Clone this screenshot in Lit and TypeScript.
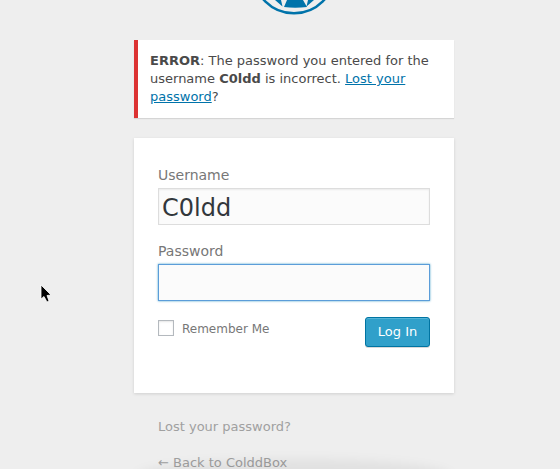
import { LitElement, html, css } from "lit";
import { customElement } from "lit/decorators.js";

@customElement("app-root")
export class AppRoot extends LitElement {
  static styles = css`
    :host {
      display: block;
      width: 560px;
      height: 469px;
      overflow: hidden;
      background: #eeeeee;
      font-family: "DejaVu Sans", sans-serif;
      font-size: 13px;
      line-height: 18px;
      color: #4a4a4a;
      position: relative;
    }
    .login {
      width: 320px;
      margin-left: 134px;
      display: flex;
      flex-direction: column;
    }
    .logo {
      height: 40px;
      display: flex;
      justify-content: center;
      align-items: flex-start;
      overflow: hidden;
    }
    .logo svg {
      width: 84px;
      height: 84px;
      margin-top: -28px;
      flex: none;
    }
    .error {
      height: 78px;
      box-sizing: border-box;
      background: #fff;
      border-left: 4px solid #dc3232;
      padding: 12px;
      box-shadow: 0 1px 1px 0 rgba(0, 0, 0, 0.1);
      margin-bottom: 20px;
    }
    .error a { color: #0073aa; text-decoration: underline; }
    form {
      height: 255px;
      box-sizing: border-box;
      background: #fff;
      padding: 27px 24px 0;
      box-shadow: 0 1px 3px rgba(0, 0, 0, 0.13);
      color: #777;
      font-size: 14px;
    }
    label { display: block; line-height: 20px; }
    .input {
      box-sizing: border-box;
      height: 37px;
      width: 272px;
      margin-top: 3px;
      padding: 3px;
      border: 1px solid #ddd;
      background: #fbfbfb;
      color: #32373c;
      font-size: 24px;
      line-height: 32px;
      box-shadow: inset 0 1px 2px rgba(0, 0, 0, 0.07);
      margin-bottom: 16px;
    }
    .input.focus {
      border-color: #5b9dd9;
      box-shadow: 0 0 2px rgba(30, 140, 190, 0.8);
      margin-bottom: 0;
    }
    .actions {
      display: flex;
      justify-content: space-between;
      align-items: flex-start;
      margin-top: 16px;
    }
    .remember {
      display: flex;
      align-items: flex-start;
      gap: 8px;
      font-size: 12px;
      line-height: 18px;
      margin-top: 3px;
    }
    .check {
      box-sizing: border-box;
      width: 16px;
      height: 16px;
      border: 1px solid #b4b9be;
      background: #fff;
      box-shadow: inset 0 1px 2px rgba(0, 0, 0, 0.1);
    }
    button {
      box-sizing: border-box;
      width: 65px;
      height: 30px;
      padding: 0;
      font: 13px/28px "DejaVu Sans", sans-serif;
      color: #fff;
      background: #30a0ca;
      border: 1px solid #0074a2;
      border-radius: 3px;
      box-shadow: inset 0 1px 0 rgba(120, 200, 230, 0.5), 0 1px 0 rgba(0, 0, 0, 0.15);
    }
    .nav {
      padding: 0 24px;
      margin-top: 25px;
      color: #a0a0a0;
      font-size: 13px;
      line-height: 18px;
    }
    .nav.back { margin-top: 18px; }
    .shade {
      position: absolute;
      left: 136px;
      top: 459px;
      width: 316px;
      height: 34px;
      border-radius: 50%;
      background: rgba(0, 0, 0, 0.05);
      filter: blur(5px);
    }
    .cursor {
      position: absolute;
      left: 40px;
      top: 284px;
      width: 12px;
      height: 20px;
    }
  `;

  render() {
    return html`
      <div class="login">
        <div class="logo">
          <svg viewBox="252 -28 84 84">
            <circle cx="294" cy="-27.5" r="40.75" fill="none" stroke="#0073aa" stroke-width="2.5"></circle>
            <path fill="#0073aa" d="M271 -5 L281 -5 L281 0 L282.5 6.5 L275 0 Z M318 -5 L308 -5 L308 0 L306.5 6.5 L314 0 Z M287 -5 L303 -5 L303 0 L307 7 Q295 8.5 284 7 L287 0 Z"></path>
          </svg>
        </div>
        <div class="error">
          <strong>ERROR</strong>: The password you entered for the username <strong>C0ldd</strong> is incorrect. <a>Lost your password</a>?
        </div>
        <form>
          <label>Username</label>
          <div class="input">C0ldd</div>
          <label>Password</label>
          <div class="input focus"></div>
          <div class="actions">
            <div class="remember"><span class="check"></span>Remember Me</div>
            <button type="button">Log In</button>
          </div>
        </form>
        <div class="nav">Lost your password?</div>
        <div class="nav back">← Back to ColddBox</div>
      </div>
      <div class="shade"></div>
      <svg class="cursor" viewBox="0 0 12 20">
        <path d="M1 1 L1 15 L4 12.5 L7 18 L9 17 L7 11.5 L11 11 Z" fill="#000" stroke="#fff" stroke-width="0.8"></path>
      </svg>
    `;
  }
}
